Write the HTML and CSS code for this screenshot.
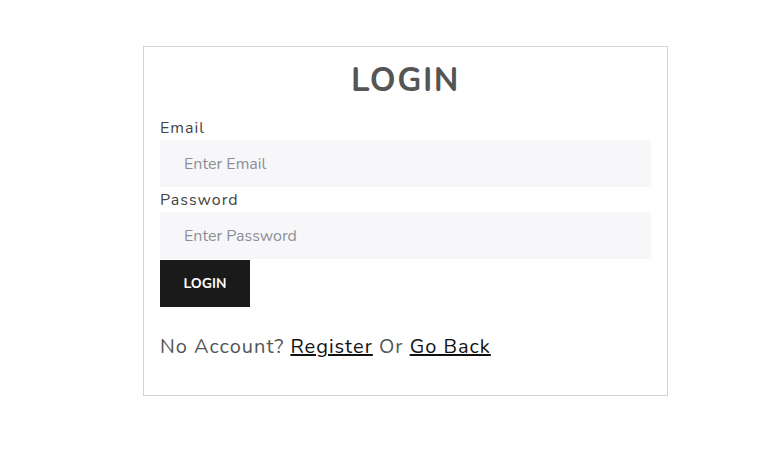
FILE: index.html
```html
<!DOCTYPE html>
<html>
<head>
  <title>Login</title>
  <link rel="stylesheet" href="styles.css">
</head>

<body>
  <main class="page">
    <div class="login-box">
      <h1 class="login-box__title">LOGIN</h1>
      <form class="login-form" method="post" action="/login">
        <label for="email">Email</label>
        <input type="text" id="email" name="email" placeholder="Enter Email">

        <label for="password">Password</label>
        <input type="password" id="password" name="password" placeholder="Enter Password">

        <button type="submit">LOGIN</button>
      </form>
      <p class="login-box__footer">No Account? <a href="/register">Register</a> Or <a href="/">Go Back</a></p>
    </div>
  </main>
</body>

</html>
```

FILE: styles.css
```css
* {
  box-sizing: border-box;
}

body {
  margin: 0;
  font-family: Nunito, Lato, "Open Sans", sans-serif;
  color: #555555;
  background-color: #ffffff;
}

.page {
  padding: 46px 0 0 143px;
}

.login-box {
  width: 525px;
  border: 1px solid #d4d4d4;
  padding: 17px 16px 34px;
}

.login-box__title {
  margin: 0 0 18px;
  text-align: center;
  font-size: 33px;
  font-weight: 700;
  letter-spacing: 1.5px;
  line-height: 34px;
  color: #555555;
}

.login-form {
  display: flex;
  flex-direction: column;
  align-items: flex-start;
}

label {
  font-size: 16px;
  font-weight: 400;
  letter-spacing: 1px;
  line-height: 23px;
  margin-top: 1px;
  color: #444444;
}

label:first-child {
  margin-top: 0;
  line-height: 24px;
}

input[type="text"],
input[type="password"] {
  width: 100%;
  height: 47px;
  padding: 0 24px;
  margin-bottom: 1px;
  border: none;
  background-color: #f7f7f9;
  font-family: inherit;
  font-size: 16px;
  color: #333333;
}

input::placeholder {
  color: #8b9098;
}

button[type="submit"] {
  width: 90px;
  height: 47px;
  border: none;
  background-color: #1a1a1a;
  color: #ffffff;
  font-family: inherit;
  font-size: 14px;
  font-weight: 700;
  cursor: pointer;
}

.login-box__footer {
  margin: 26px 0 0;
  font-size: 20px;
  letter-spacing: 1px;
  line-height: 28px;
  color: #555555;
}

.login-box__footer a {
  color: #111111;
  text-decoration: underline;
}
```
